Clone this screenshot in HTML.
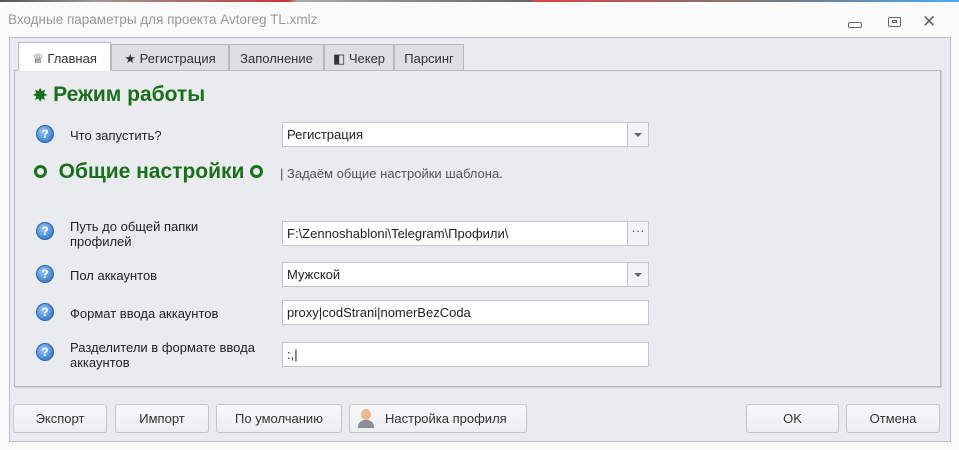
<!DOCTYPE html>
<html><head><meta charset="utf-8"><style>
*{box-sizing:border-box;margin:0;padding:0}
body{width:959px;height:450px;background:#fafafa;font-family:"Liberation Sans",sans-serif;font-size:12px;color:#222;position:relative;overflow:hidden}
.a{position:absolute;white-space:nowrap}
.title{left:8px;top:12px;color:#999;font-size:13.5px}
.outer{left:9px;top:37px;width:942px;height:405px;background:#e9ebef;border:1px solid #b9bcc2}
.panel{left:14px;top:70px;width:927px;height:317px;background:#e9ebef;border:1px solid #b4b7bd;box-shadow:1px 1px 1px #c8cace}
.tab{top:44px;height:27px;background:#dcdfe4;border:1px solid #b6b9bf;padding-top:6px;text-align:center;color:#333;font-size:13px}
.tab.on{background:#fff;border-bottom-color:#fff;top:42px;height:29px;padding-top:8px}
.h{color:#19701a;font-weight:bold;font-size:21px}
.q{width:18px;height:18px;border-radius:50%;background:radial-gradient(circle at 40% 35%,#9cc8f5,#3d84d6 70%);border:1px solid #2d64a8;color:#fff;font-size:12px;font-weight:bold;text-align:center;line-height:16px;left:36px}
.lbl{left:70px;font-size:13px;line-height:15px}
.in{left:282px;width:367px;height:25px;background:#fff;border:1px solid #c3c6cb;padding:4px 4px;font-size:13px}
.dd{position:absolute;right:0;top:0;width:21px;height:23px;border-left:1px solid #c3c6cb;background:#f3f4f6}
.btn{top:404px;height:29px;background:linear-gradient(#f7f8f9,#eceef0);border:1px solid #c2c5ca;border-radius:3px;text-align:center;line-height:27px;font-size:13px;color:#333}
</style></head><body>
<div class="a" style="left:0;top:0;width:959px;height:2px;background:linear-gradient(90deg,#555 0,#999 10%,#c33 30%,#aaa 31%,#666 55%,#d44 56%,#777 80%,#4af 100%)"></div>
<div class="a title">Входные параметры для проекта Avtoreg TL.xmlz</div>
<div class="a" style="left:848px;top:22px;width:14px;height:6px;border:1.5px solid #666;border-radius:2px"></div>
<div class="a" style="left:888px;top:17px;width:13px;height:10px;border:1.5px solid #666;border-radius:2px"><div style="margin:2px auto;width:5px;height:3px;border:1px solid #666"></div></div>
<div class="a" style="left:922px;top:12px;color:#666;font-size:17px">✕</div>
<div class="a outer"></div>
<div class="a panel"></div>
<div class="a tab on" style="left:18px;width:93px">♕ Главная</div>
<div class="a tab" style="left:111px;width:118px">★ Регистрация</div>
<div class="a tab" style="left:229px;width:95px">Заполнение</div>
<div class="a tab" style="left:324px;width:70px">◧ Чекер</div>
<div class="a tab" style="left:394px;width:70px">Парсинг</div>
<div class="a h" style="left:33px;top:83px"><span style="font-size:17px">✸</span> Режим работы</div>
<div class="a q" style="top:125px">?</div><div class="a lbl" style="top:128px">Что запустить?</div>
<div class="a in" style="top:122px">Регистрация<div class="dd"><div style="margin:10px auto;width:0;border:4px solid transparent;border-top:4px solid #666;border-bottom:0"></div></div></div>
<div class="a h" style="left:34px;top:160px"><span style="display:inline-block;width:13px;height:13px;border:3.5px solid #19701a;border-radius:50%"></span>&nbsp; Общие настройки <span style="display:inline-block;width:13px;height:13px;border:3.5px solid #19701a;border-radius:50%"></span></div>
<div class="a" style="left:280px;top:166px;color:#555;font-size:13px">| Задаём общие настройки шаблона.</div>
<div class="a q" style="top:222px">?</div><div class="a lbl" style="top:219px">Путь до общей папки<br>профилей</div>
<div class="a in" style="top:221px">F:\Zennoshabloni\Telegram\Профили\<div class="dd" style="text-align:center;line-height:18px;color:#555">···</div></div>
<div class="a q" style="top:265px">?</div><div class="a lbl" style="top:268px">Пол аккаунтов</div>
<div class="a in" style="top:262px">Мужской<div class="dd"><div style="margin:10px auto;width:0;border:4px solid transparent;border-top:4px solid #666;border-bottom:0"></div></div></div>
<div class="a q" style="top:303px">?</div><div class="a lbl" style="top:306px">Формат ввода аккаунтов</div>
<div class="a in" style="top:300px">proxy|codStrani|nomerBezCoda</div>
<div class="a q" style="top:343px">?</div><div class="a lbl" style="top:340px">Разделители в формате ввода<br>аккаунтов</div>
<div class="a in" style="top:342px">:,|</div>
<div class="a btn" style="left:13px;width:94px">Экспорт</div>
<div class="a btn" style="left:115px;width:94px">Импорт</div>
<div class="a btn" style="left:216px;width:126px">По умолчанию</div>
<div class="a btn" style="left:349px;width:178px;text-align:left;padding-left:35px">Настройка профиля<div class="a" style="left:8px;top:4px;width:16px;height:20px"><div style="width:10px;height:11px;margin:0 auto;border-radius:50%;background:#e9b98a"></div><div style="width:16px;height:8px;border-radius:7px 7px 0 0;background:#8a8f96"></div></div></div>
<div class="a btn" style="left:746px;width:93px">OK</div>
<div class="a btn" style="left:846px;width:94px">Отмена</div>
</body></html>
